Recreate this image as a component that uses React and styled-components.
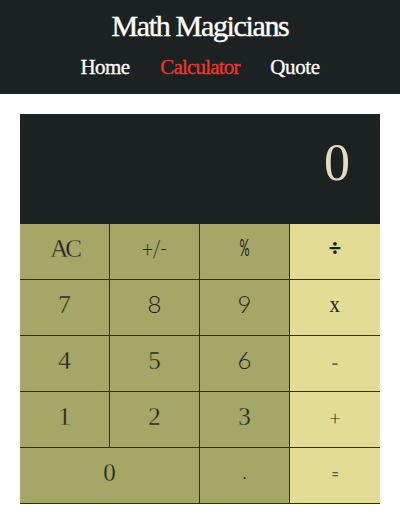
import React from 'react';
import styled, { createGlobalStyle } from 'styled-components';

const GlobalStyle = createGlobalStyle`
  *, *::before, *::after { box-sizing: border-box; }
  body { margin: 0; background: #fff; font-family: "Liberation Serif", serif; }
`;

const Header = styled.header`
  height: 94px;
  padding-top: 8px;
  background: #1c2222;
  color: #fff;
  display: flex;
  flex-direction: column;
  align-items: center;
`;

const Title = styled.h1`
  margin: 0;
  font-size: 30px;
  font-weight: 400;
  line-height: 36px;
  letter-spacing: -1.35px;
  white-space: nowrap;
  -webkit-text-stroke: 0.4px currentColor;
`;

const Nav = styled.nav`
  display: flex;
  gap: 31px;
  margin-top: 11px;
`;

const NavLink = styled.a`
  display: flex;
  justify-content: center;
  width: ${({ $width }) => $width}px;
  font-size: 21px;
  line-height: 24px;
  letter-spacing: ${({ $spacing }) => $spacing}px;
  white-space: nowrap;
  color: ${({ $active }) => ($active ? '#f4352c' : '#fff')};
  -webkit-text-stroke: 0.3px currentColor;
`;

const Calculator = styled.main`
  width: 360px;
  margin: 20px auto 0;
`;

const Display = styled.div`
  height: 110px;
  padding: 0 30px 12px 0;
  display: flex;
  align-items: center;
  justify-content: flex-end;
  background: #1c2222;
  color: #e5dcc0;
  font-size: 52px;
  line-height: 60px;
`;

const Keypad = styled.div`
  display: grid;
  grid-template-columns: repeat(4, 90px);
  grid-auto-rows: 56px;
`;

const Key = styled.button`
  grid-column: span ${({ $span }) => $span || 1};
  display: flex;
  justify-content: center;
  margin: 0;
  padding: 9px 0 0;
  border: 0;
  border-bottom: 1px solid #561820;
  border-right: ${({ $operator }) => ($operator ? '0' : '1px solid #561820')};
  background: ${({ $operator }) => ($operator ? '#e2dc94' : '#a5a767')};
  color: #1c2222;
  font-family: "Liberation Serif", serif;
  font-size: 25px;
  line-height: 30px;
`;

const Glyph = styled.span`
  display: inline-block;
  font-family: ${({ $sans }) => ($sans ? 'Lato, sans-serif' : 'inherit')};
  font-weight: ${({ $weight }) => $weight || 400};
  font-size: ${({ $size }) => ($size ? `${$size}px` : 'inherit')};
  letter-spacing: ${({ $spacing }) => $spacing || 0}px;
  opacity: ${({ $opacity }) => $opacity || 1};
  transform: translateY(${({ $shift }) => $shift || 0}px) scaleX(${({ $stretch }) => $stretch || 1});
  -webkit-text-stroke: ${({ $thin }) => ($thin ? `${$thin}px #a5a767` : '0')};
`;

const keys = [
  { text: 'AC', spacing: -3, thin: 0.35, shift: 1 },
  { text: '+/-', sans: true, weight: 300, size: 24, stretch: 0.82, spacing: -1 },
  { text: '%', sans: true, weight: 400, size: 24, stretch: 0.52, shift: -1 },
  { text: '÷', operator: true, sans: true, weight: 900, size: 22 },
  { text: '7', thin: 0.35, shift: 1 },
  { text: '8', sans: true, weight: 300, size: 24 },
  { text: '9', sans: true, weight: 300, size: 24 },
  { text: 'x', operator: true, size: 23, stretch: 0.9, shift: 1 },
  { text: '4', thin: 0.35, shift: 1 },
  { text: '5', thin: 0.35, shift: 1 },
  { text: '6', sans: true, weight: 300, size: 24 },
  { text: '-', operator: true, size: 24, opacity: 0.6, stretch: 0.85, shift: 2 },
  { text: '1', thin: 0.35, shift: 1 },
  { text: '2', thin: 0.35, shift: 1 },
  { text: '3', thin: 0.35, shift: 1 },
  { text: '+', operator: true, sans: true, weight: 300, size: 20, shift: 1 },
  { text: '0', span: 2, thin: 0.35, shift: 1 },
  { text: '.', size: 16, shift: 2 },
  { text: '=', operator: true, sans: true, size: 18, stretch: 0.7, opacity: 0.7, shift: 1 },
];

export default function App() {
  return (
    <>
      <GlobalStyle />
      <Header>
        <Title>Math Magicians</Title>
        <Nav>
          <NavLink $width={49} $spacing={-0.6}>Home</NavLink>
          <NavLink $width={79} $spacing={-0.8} $active>Calculator</NavLink>
          <NavLink $width={49} $spacing={-0.4}>Quote</NavLink>
        </Nav>
      </Header>
      <Calculator>
        <Display><Glyph>0</Glyph></Display>
        <Keypad>
          {keys.map((key) => (
            <Key key={key.text} $span={key.span} $operator={key.operator}>
              <Glyph
                $sans={key.sans}
                $weight={key.weight}
                $size={key.size}
                $spacing={key.spacing}
                $opacity={key.opacity}
                $stretch={key.stretch}
                $shift={key.shift}
                $thin={key.thin}
              >
                {key.text}
              </Glyph>
            </Key>
          ))}
        </Keypad>
      </Calculator>
    </>
  );
}
